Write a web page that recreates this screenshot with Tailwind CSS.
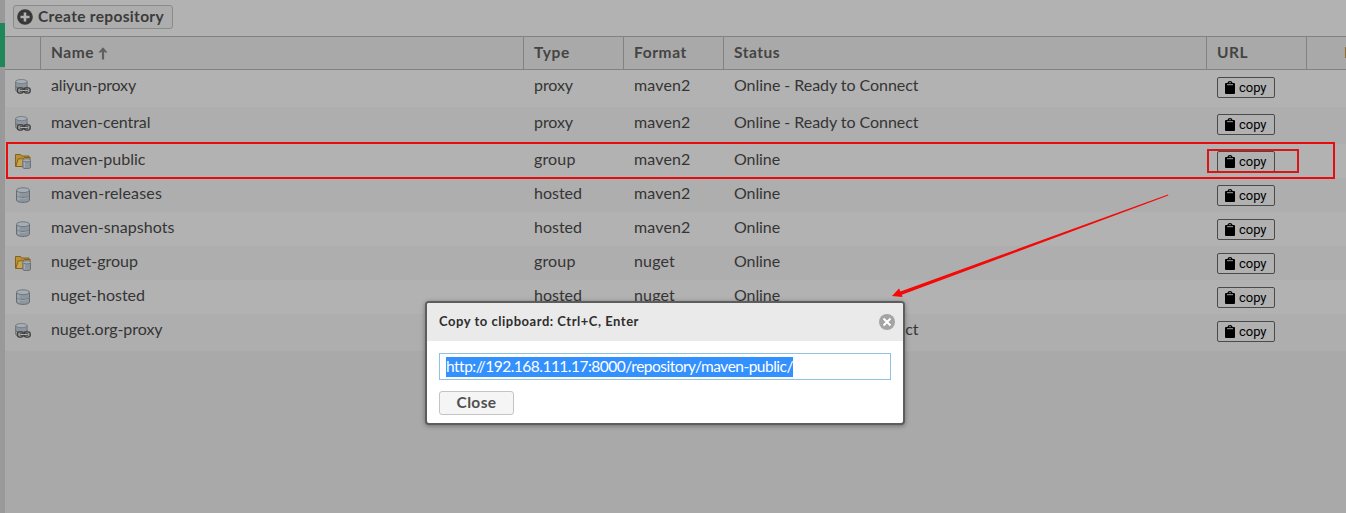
<!DOCTYPE html>
<html lang="en">
<head>
<meta charset="utf-8">
<title>Repositories</title>
<script src="https://cdn.jsdelivr.net/npm/@tailwindcss/browser@4"></script>
</head>
<body class="relative flex h-[513px] w-[1346px] overflow-hidden bg-[#a9a9a9] font-['Lato',sans-serif] text-[16px] text-[#353535]">
<svg class="hidden">
  <symbol id="db" viewBox="0 0 16 16">
    <path d="M1.500 3.500v9.500c0 1.300 2.500 2.400 6.500 2.400s6.500-1.100 6.500-2.400V3.500z" fill="#8d969e" stroke="#666c72"/>
    <path d="M3 5v8M4 5.500v8" stroke="#a3acb3"/>
    <path d="M1.500 8.300c0 1.300 2.500 2.200 6.500 2.200s6.500-.9 6.500-2.200" fill="none" stroke="#666c72"/>
    <path d="M2.500 9.800c1 .9 3 1.500 5.500 1.500s4.500-.6 5.500-1.500" fill="none" stroke="#a7b0b7" stroke-width=".8"/>
    <ellipse cx="8" cy="3.200" rx="6.500" ry="2.400" fill="#a5aeb6" stroke="#70777d"/>
  </symbol>
  <symbol id="proxy" viewBox="0 0 16 16">
    <path d="M.6 2.500v8.500c0 1.300 2 2.200 5.500 2.200s6-.9 6-2.200V2.500z" fill="#8d969e" stroke="#71777c"/>
    <path d="M.6 7c0 1.300 2 2.200 5.500 2.200s6-.9 6-2.200" fill="none" stroke="#6c7379"/>
    <ellipse cx="6.400" cy="2.600" rx="5.800" ry="2.100" fill="#a5aeb6" stroke="#777e84"/>
    <rect x="2.500" y="8.900" width="5.800" height="5.200" rx="1.800" fill="#999" stroke="#3c3c3c" stroke-width="1.300"/>
    <rect x="9.200" y="8.900" width="6" height="5.200" rx="1.800" fill="#999" stroke="#3c3c3c" stroke-width="1.300"/>
    <path d="M5 11.500h8" stroke="#3c3c3c" stroke-width="2.400"/>
    <path d="M5.200 11.500h7.600" stroke="#b0b0b0" stroke-width="1"/>
  </symbol>
  <symbol id="group" viewBox="0 0 16 16">
    <path d="M.5 13.500V1.500h5l1 1.500h7.500v3" fill="#b99338" stroke="#866018"/>
    <path d="M.8 13.500L3.200 5.800h5l1-1.300h6l-1 9z" fill="#c9a550" stroke="#866018"/>
    <path d="M7.800 7.500v6.700c0 .9 1.500 1.500 3.900 1.500s3.900-.6 3.900-1.500V7.500z" fill="#8d969e" stroke="#666d73"/>
    <path d="M9.300 8v6.500" stroke="#a9b2b9"/>
    <ellipse cx="11.700" cy="7.300" rx="3.900" ry="1.600" fill="#a5aeb6" stroke="#70777d"/>
  </symbol>
  <symbol id="clip" viewBox="0 0 10 13">
    <path d="M1 2h1.500c.2-1.200 1-2 2.500-2s2.300.8 2.500 2H9a1 1 0 0 1 1 1v9a1 1 0 0 1-1 1H1a1 1 0 0 1-1-1V3a1 1 0 0 1 1-1z" fill="#000"/>
    <path d="M2 3.700h6" stroke="#a0a0a0" stroke-width="1"/>
    <path d="M4.200 1.700h1.600" stroke="#999" stroke-width="1"/>
  </symbol>
</svg>

<div class="h-full w-[5px] shrink-0 bg-[#999] pt-[23px]"><div class="h-11 bg-[#1f8759]"></div></div>

<main class="flex min-w-0 grow flex-col">
  <div class="flex h-9 shrink-0 items-start bg-[#b2b2b2] pt-[5px] pl-2">
    <button class="flex h-6 w-[160px] items-center rounded-[3px] border border-[#8b8b8b] bg-[#adadad] pl-[3px] font-bold text-[#3b3b3b]">
      <svg class="mr-[5px] size-4 shrink-0" viewBox="0 0 16 16"><circle cx="8" cy="8" r="7.800" fill="#383838"/><path d="M8 3.500v9M3.500 8h9" stroke="#b2b2b2" stroke-width="2.600"/></svg>
      <span class="fit whitespace-nowrap text-[15.500px]" data-w="126">Create repository</span>
    </button>
  </div>
  <div class="flex h-[34px] shrink-0 border-y border-[#828282] bg-[#a9a9a9] text-[15.500px] leading-[31px] font-bold text-[#444]">
    <div class="w-9 shrink-0 border-r border-[#828282]"></div>
    <div class="flex w-[483px] shrink-0 items-start border-r border-[#828282] pl-[10px]"><span class="fit" data-w="43">Name</span>
      <svg class="mt-[10px] ml-1 h-[13px] w-[10px]" viewBox="0 0 10 13"><path d="M5 12.500V3" stroke="#606060" stroke-width="2.200"/><path d="M.4 5.500L5 .3l4.600 5.200H7L5 3.600 3 5.500z" fill="#606060"/></svg></div>
    <div class="w-[100px] shrink-0 border-r border-[#828282] pl-[10px]"><span class="fit" data-w="36">Type</span></div>
    <div class="w-[100px] shrink-0 border-r border-[#828282] pl-[10px]"><span class="fit" data-w="53">Format</span></div>
    <div class="w-[483px] shrink-0 border-r border-[#828282] pl-[10px]"><span class="fit" data-w="46">Status</span></div>
    <div class="w-[100px] shrink-0 border-r border-[#828282] pl-[10px]"><span class="fit" data-w="31">URL</span></div>
    <div class="min-w-0 grow overflow-hidden pl-[37px] whitespace-nowrap text-[#7a5b3c]">Health check</div>
  </div>
  <div id="rows"></div>
</main>

<svg class="pointer-events-none absolute inset-0 h-[513px] w-[1346px]" viewBox="0 0 1346 513">
  <rect x="7" y="143" width="1327" height="35" fill="none" stroke="#e80c0c" stroke-width="2"/>
  <rect x="1208" y="150" width="90" height="22" fill="none" stroke="#d81616" stroke-width="2"/>
  <path d="M1168 194.500L900.500 291.500L899 288.500L892 296L902.500 297L901.800 294.800L1168.300 195.500z" fill="#f40808"/>
</svg>

<section class="absolute top-[301px] left-[425px] flex h-[124px] w-[480px] flex-col overflow-hidden rounded-[4px] border-2 border-[#5d5d5d] bg-white shadow-[0_1px_5px_rgba(0,0,0,0.35)]">
  <header class="flex h-[38px] shrink-0 items-center justify-between bg-[#eaeaea] pr-2 pl-3 text-[13px] font-bold text-[#2e2e2e]">
    <span class="fit" data-w="200">Copy to clipboard: Ctrl+C, Enter</span>
    <svg class="size-4" viewBox="0 0 16 16"><circle cx="8" cy="8" r="8" fill="#a4a4a4"/><path d="M4.500 4.500l7 7M11.500 4.500l-7 7" stroke="#fff" stroke-width="2"/></svg>
  </header>
  <div class="mt-3 ml-3 flex h-[27px] w-[452px] items-center border border-[#8fc2e0] pl-1.5">
    <span class="flex h-5 w-[347px] items-center bg-[#3390ff] text-[15.500px] text-white"><span class="fit whitespace-nowrap" data-w="347">http://192.168.111.17:8000/repository/maven-public/</span></span>
  </div>
  <button class="mt-[11px] ml-3 flex h-6 w-[75px] items-center justify-center rounded-[3px] border border-[#c4c4c4] bg-[#f5f5f5] text-[15.500px] font-bold text-[#505050]"><span class="fit" data-w="40">Close</span></button>
</section>

<script>
const rows = [
  ['proxy', 'aliyun-proxy', 85, 'proxy', 39, 'maven2', 'Online - Ready to Connect'],
  ['proxy', 'maven-central', 99.500, 'proxy', 39, 'maven2', 'Online - Ready to Connect'],
  ['group', 'maven-public', 94.500, 'group', 41.500, 'maven2', 'Online'],
  ['db', 'maven-releases', 111, 'hosted', 48, 'maven2', 'Online'],
  ['db', 'maven-snapshots', 123.500, 'hosted', 48, 'maven2', 'Online'],
  ['group', 'nuget-group', 87, 'group', 41.500, 'nuget', 'Online'],
  ['db', 'nuget-hosted', 94, 'hosted', 48, 'nuget', 'Online'],
  ['proxy', 'nuget.org-proxy', 111.500, 'proxy', 39, 'nuget', 'Online - Ready to Connect'],
];
document.getElementById('rows').innerHTML = rows.map(([icon, name, nw, type, tw, format, status], i) => `
  <div class="flex ${status === 'Online' ? 'h-[34px]' : 'h-[37px]'} ${i % 2 ? 'bg-[#aeaeae]' : 'bg-[#b2b2b2]'} leading-[30px]">
    <div class="w-9 shrink-0 pt-[9px] pl-[10px]"><svg class="size-4"><use href="#${icon}"/></svg></div>
    <div class="w-[483px] shrink-0 pl-[10px]"><span class="fit" data-w="${nw}">${name}</span></div>
    <div class="w-[100px] shrink-0 pl-[10px]"><span class="fit" data-w="${tw}">${type}</span></div>
    <div class="w-[100px] shrink-0 pl-[10px]"><span class="fit" data-w="${format === 'nuget' ? 41 : 56.500}">${format}</span></div>
    <div class="w-[483px] shrink-0 pl-[10px]"><span class="fit" data-w="${status === 'Online' ? 46 : 184.500}">${status}</span></div>
    <div class="w-[100px] shrink-0 pt-[7px] pl-[10px]">
      <button class="flex h-[21px] w-[58px] items-center rounded-[2px] border border-[#4a4a4a] bg-[#b1b1b1] pl-[7px] font-['Roboto',sans-serif] text-[13px] leading-none text-black"><svg class="mr-1 h-[13px] w-[10px] shrink-0"><use href="#clip"/></svg><span class="fit" data-w="27.500">copy</span></button>
    </div>
  </div>`).join('');

/* Spaces each label's letters so that it fills its measure (data-w). */
function fitLabels() {
  document.querySelectorAll('.fit').forEach(el => {
    el.style.fontVariantLigatures = 'none';
    el.style.letterSpacing = '0.001px';
    const gap = (el.dataset.w - el.getBoundingClientRect().width) / el.textContent.length;
    el.style.letterSpacing = gap.toFixed(3) + 'px';
  });
}
fitLabels();
window.addEventListener('load', fitLabels);
document.fonts.ready.then(fitLabels);
</script>
</body>
</html>
